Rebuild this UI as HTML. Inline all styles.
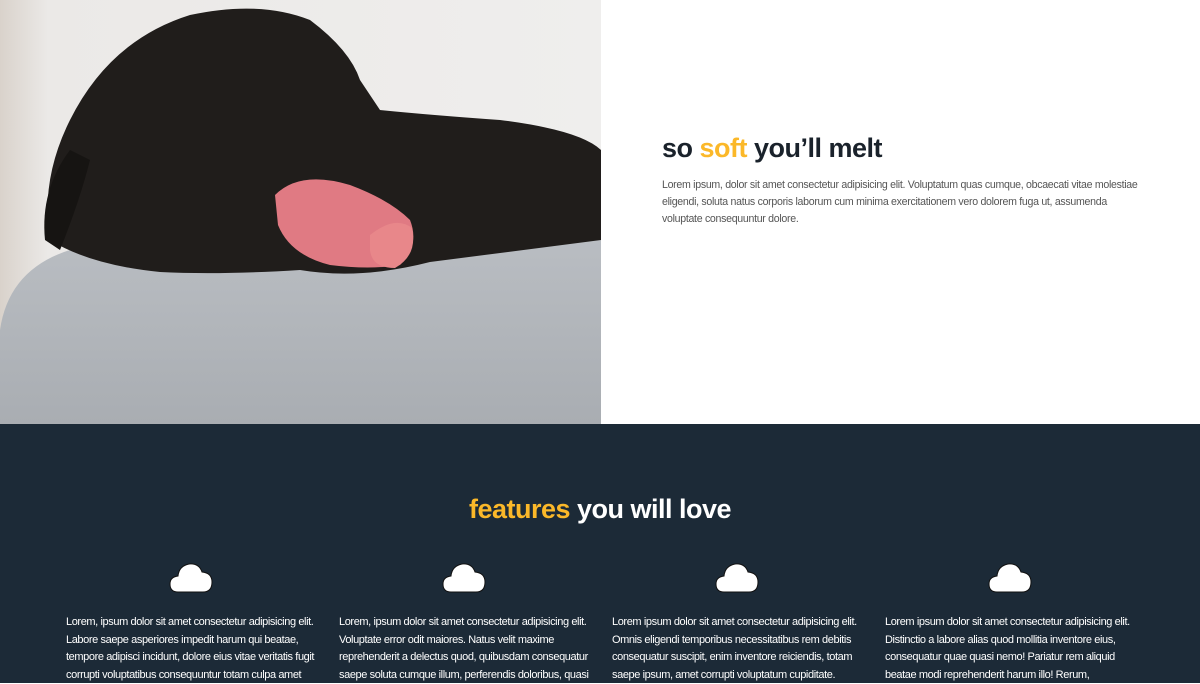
<!DOCTYPE html>
<html><head><meta charset="utf-8"><style>
*{margin:0;padding:0;box-sizing:border-box}
body{width:1200px;height:683px;overflow:hidden;background:#fff;font-family:"Liberation Sans",sans-serif}
.top{position:relative;height:424px}
.photo{position:absolute;left:0;top:0;width:601px;height:424px}
.txt{position:absolute;left:662px;top:130px;width:520px}
h2{font-size:27px;font-weight:bold;color:#1a222b;letter-spacing:-0.5px;line-height:36px}
.y{color:#fbb829}
.txt p{margin-top:11px;font-size:10.6px;line-height:17px;color:#555;letter-spacing:-0.3px;white-space:nowrap}
.dark{position:absolute;top:424px;left:0;width:1200px;height:259px;background:#1c2a37}
.col{position:absolute;top:614px;width:262px;color:#fff;font-size:11px;line-height:17.5px;letter-spacing:-0.4px;white-space:nowrap}
.cloud{position:absolute;top:561px;width:44px;height:32px}
</style></head><body>
<div class="top">
<svg class="photo" viewBox="0 0 601 424">
<defs><linearGradient id="bg" x1="0" x2="1"><stop offset="0" stop-color="#d9d2cb"/><stop offset="0.08" stop-color="#ebe9e7"/><stop offset="1" stop-color="#efeeed"/></linearGradient>
<linearGradient id="cu" x1="0" y1="0" x2="0" y2="1"><stop offset="0" stop-color="#b9bdc2"/><stop offset="1" stop-color="#a9adb2"/></linearGradient></defs>
<rect width="601" height="424" fill="url(#bg)"/>
<path d="M0 424 L0 330 Q10 260 90 245 L601 240 L601 424Z" fill="url(#cu)"/>
<path d="M50 240 Q40 180 70 120 Q110 40 190 15 Q260 0 310 20 Q350 50 360 80 L380 110 Q430 115 500 120 Q580 130 601 150 L601 240 L430 262 Q360 280 300 270 Q220 275 160 272 Q90 265 50 240Z" fill="#201d1b"/>
<path d="M70 150 Q40 190 45 240 L60 250 Q80 200 90 160Z" fill="#161412"/>
<path d="M275 195 Q300 170 350 185 Q390 200 410 220 Q420 245 400 265 Q370 270 330 265 Q290 255 278 225Z" fill="#e07a83"/>
<path d="M370 235 Q395 215 412 228 Q418 255 395 268 Q372 268 370 250Z" fill="#e8878a"/>
</svg>
<div class="txt"><h2>so <span class="y">soft</span> you’ll melt</h2>
<p>Lorem ipsum, dolor sit amet consectetur adipisicing elit. Voluptatum quas cumque, obcaecati vitae molestiae<br>eligendi, soluta natus corporis laborum cum minima exercitationem vero dolorem fuga ut, assumenda<br>voluptate consequuntur dolore.</p></div>
</div>
<div class="dark"></div>
<h2 style="position:absolute;top:491px;left:0;width:1200px;text-align:center;color:#fff;font-size:27px"><span class="y">features</span> you will love</h2>
<svg class="cloud" style="left:169px" viewBox="0 0 44 32"><path d="M9 31 Q1 31 1 23 Q1 16 9 15 Q10 5 20 3 Q30 2 33 11 Q43 12 43 21 Q43 31 34 31Z" fill="#fff" stroke="#111" stroke-width="1"/></svg>
<svg class="cloud" style="left:442px" viewBox="0 0 44 32"><path d="M9 31 Q1 31 1 23 Q1 16 9 15 Q10 5 20 3 Q30 2 33 11 Q43 12 43 21 Q43 31 34 31Z" fill="#fff" stroke="#111" stroke-width="1"/></svg>
<svg class="cloud" style="left:715px" viewBox="0 0 44 32"><path d="M9 31 Q1 31 1 23 Q1 16 9 15 Q10 5 20 3 Q30 2 33 11 Q43 12 43 21 Q43 31 34 31Z" fill="#fff" stroke="#111" stroke-width="1"/></svg>
<svg class="cloud" style="left:988px" viewBox="0 0 44 32"><path d="M9 31 Q1 31 1 23 Q1 16 9 15 Q10 5 20 3 Q30 2 33 11 Q43 12 43 21 Q43 31 34 31Z" fill="#fff" stroke="#111" stroke-width="1"/></svg>
<div class="col" style="left:66px">Lorem, ipsum dolor sit amet consectetur adipisicing elit.<br>Labore saepe asperiores impedit harum qui beatae,<br>tempore adipisci incidunt, dolore eius vitae veritatis fugit<br>corrupti voluptatibus consequuntur totam culpa amet</div>
<div class="col" style="left:339px">Lorem, ipsum dolor sit amet consectetur adipisicing elit.<br>Voluptate error odit maiores. Natus velit maxime<br>reprehenderit a delectus quod, quibusdam consequatur<br>saepe soluta cumque illum, perferendis doloribus, quasi</div>
<div class="col" style="left:612px">Lorem ipsum dolor sit amet consectetur adipisicing elit.<br>Omnis eligendi temporibus necessitatibus rem debitis<br>consequatur suscipit, enim inventore reiciendis, totam<br>saepe ipsum, amet corrupti voluptatum cupiditate.</div>
<div class="col" style="left:885px">Lorem ipsum dolor sit amet consectetur adipisicing elit.<br>Distinctio a labore alias quod mollitia inventore eius,<br>consequatur quae quasi nemo! Pariatur rem aliquid<br>beatae modi reprehenderit harum illo! Rerum,</div>
</body></html>
